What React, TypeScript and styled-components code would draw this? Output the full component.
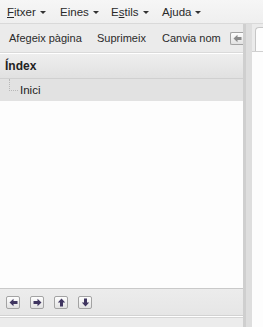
import React from "react";
import styled, { createGlobalStyle } from "styled-components";

const GlobalStyle = createGlobalStyle`
  html, body { margin: 0; padding: 0; background: #fff; }
  body { font-family: "Liberation Sans", Arial, sans-serif; font-size: 11px; color: #222; }
`;

const Page = styled.div`
  width: 263px;
  height: 327px;
  display: flex;
  flex-direction: column;
  overflow: hidden;
`;

const MenuBar = styled.div`
  height: 23px;
  flex: none;
  display: flex;
  align-items: center;
  padding-left: 7px;
  background: linear-gradient(#f6f6f6, #efefef);
  border-bottom: 1px solid #d9d9d9;
`;

const MenuItem = styled.div<{ w: number }>`
  width: ${(p) => p.w}px;
  display: flex;
  align-items: center;
  gap: 4px;
  font-size: 11.5px;
  color: #2a2a2a;
  padding-top: 1px;
`;

const Caret = styled.span`
  width: 0;
  height: 0;
  border-left: 3px solid transparent;
  border-right: 3px solid transparent;
  border-top: 3px solid #333;
  margin-top: 1px;
`;

const Body = styled.div`
  flex: 1;
  display: flex;
  min-height: 0;
`;

const LeftPane = styled.div`
  width: 243px;
  display: flex;
  flex-direction: column;
`;

const Toolbar = styled.div`
  height: 28px;
  flex: none;
  display: flex;
  align-items: center;
  padding-left: 9px;
  background: #ebebeb;
  border-bottom: 1px solid #dadada;
  overflow: hidden;
`;

const ToolItem = styled.div<{ w: number }>`
  width: ${(p) => p.w}px;
  flex: none;
  font-size: 11px;
  white-space: nowrap;
  color: #2a2a2a;
`;

const SmallBtn = styled.div<{ clip?: boolean }>`
  width: 14px;
  height: 13px;
  flex: none;
  box-sizing: border-box;
  border: 1px solid #a3a3a3;
  border-radius: 2px;
  background: linear-gradient(#fdfdfd, #e2e2e2);
  display: flex;
  align-items: center;
  justify-content: center;
  ${(p) => (p.clip ? "border-right: none; border-radius: 2px 0 0 2px;" : "")}
`;

const Header = styled.div`
  height: 24px;
  flex: none;
  display: flex;
  align-items: center;
  padding-left: 5px;
  margin-top: 1px;
  background: linear-gradient(#eeeeee, #e1e1e1);
  border-bottom: 1px solid #d0d0d0;
  font-weight: bold;
  font-size: 12px;
  color: #222;
`;

const TreeArea = styled.div`
  flex: 1;
  background: #fdfdfd;
  border-bottom: 1px solid #c9c9c9;
`;

const TreeRow = styled.div`
  height: 22px;
  display: flex;
  align-items: center;
  background: #e2e2e2;
  font-size: 11.5px;
`;

const Guide = styled.span`
  width: 8px;
  height: 11px;
  margin-left: 9px;
  margin-right: 2px;
  margin-top: -10px;
  border-left: 1px dotted #b8b8b8;
  border-bottom: 1px dotted #b8b8b8;
`;

const BottomBar = styled.div`
  height: 26px;
  flex: none;
  display: flex;
  align-items: center;
  gap: 10px;
  padding-left: 6px;
  background: linear-gradient(#ececec, #e6e6e6);
  border-bottom: 1px solid #d2d2d2;
`;

const StatusStrip = styled.div`
  height: 9px;
  flex: none;
  margin-top: 1px;
  background: #ececec;
  border-top: 1px solid #d6d6d6;
  border-right: 1px solid #d6d6d6;
  width: 244px;
`;

const Splitter = styled.div`
  width: 9px;
  flex: none;
  background: #dedede;
  border-left: 3px solid #cfcfcf;
  box-sizing: border-box;
`;

const RightPane = styled.div`
  flex: 1;
  display: flex;
  flex-direction: column;
  background: #ebebeb;
  padding-top: 3px;
  padding-left: 3px;
`;

const Tab = styled.div`
  height: 23px;
  flex: none;
  background: #fdfdfd;
  border: 1px solid #c6c6c6;
  border-right: none;
  border-bottom: none;
  border-radius: 4px 0 0 0;
`;

const Content = styled.div`
  flex: 1;
  background: #fdfdfd;
  border-top: 1px solid #d0d0d0;
  margin-left: -3px;
`;

const U = styled.span`
  text-decoration: underline;
`;

const Arrow = ({ dir, color }: { dir: "l" | "r" | "u" | "d"; color: string }) => {
  const rot = { l: 0, r: 180, u: 90, d: 270 }[dir];
  return (
    <svg width="9" height="9" viewBox="0 0 9 9">
      <g transform={`rotate(${rot} 4.5 4.5)`}>
        <path d="M0.5 4.5 L4.5 0.8 L4.5 3 L8.5 3 L8.5 6 L4.5 6 L4.5 8.2 Z" fill={color} />
      </g>
    </svg>
  );
};

const menus = [
  { label: "Fitxer", key: 0, w: 53 },
  { label: "Eines", key: -1, w: 51 },
  { label: "Estils", key: 1, w: 51 },
  { label: "Ajuda", key: -1, w: 60 },
];

const App = () => {
  return (
    <Page>
      <GlobalStyle />
      <MenuBar>
        {menus.map((m) => (
          <MenuItem key={m.label} w={m.w}>
            <span>
              {m.label.split("").map((c, i) => (i === m.key ? <U key={i}>{c}</U> : c))}
            </span>
            <Caret />
          </MenuItem>
        ))}
      </MenuBar>
      <Body>
        <LeftPane>
          <Toolbar>
            <ToolItem w={88}>Afegeix pàgina</ToolItem>
            <ToolItem w={65}>Suprimeix</ToolItem>
            <ToolItem w={68}>Canvia nom</ToolItem>
            <SmallBtn clip>
              <Arrow dir="l" color="#8a8a8a" />
            </SmallBtn>
          </Toolbar>
          <Header>Índex</Header>
          <TreeArea>
            <TreeRow>
              <Guide />
              Inici
            </TreeRow>
          </TreeArea>
          <BottomBar>
            <SmallBtn><Arrow dir="l" color="#3f3560" /></SmallBtn>
            <SmallBtn><Arrow dir="r" color="#3f3560" /></SmallBtn>
            <SmallBtn><Arrow dir="u" color="#3f3560" /></SmallBtn>
            <SmallBtn><Arrow dir="d" color="#3f3560" /></SmallBtn>
          </BottomBar>
          <StatusStrip />
        </LeftPane>
        <Splitter />
        <RightPane>
          <Tab />
          <Content />
        </RightPane>
      </Body>
    </Page>
  );
};

export default App;
